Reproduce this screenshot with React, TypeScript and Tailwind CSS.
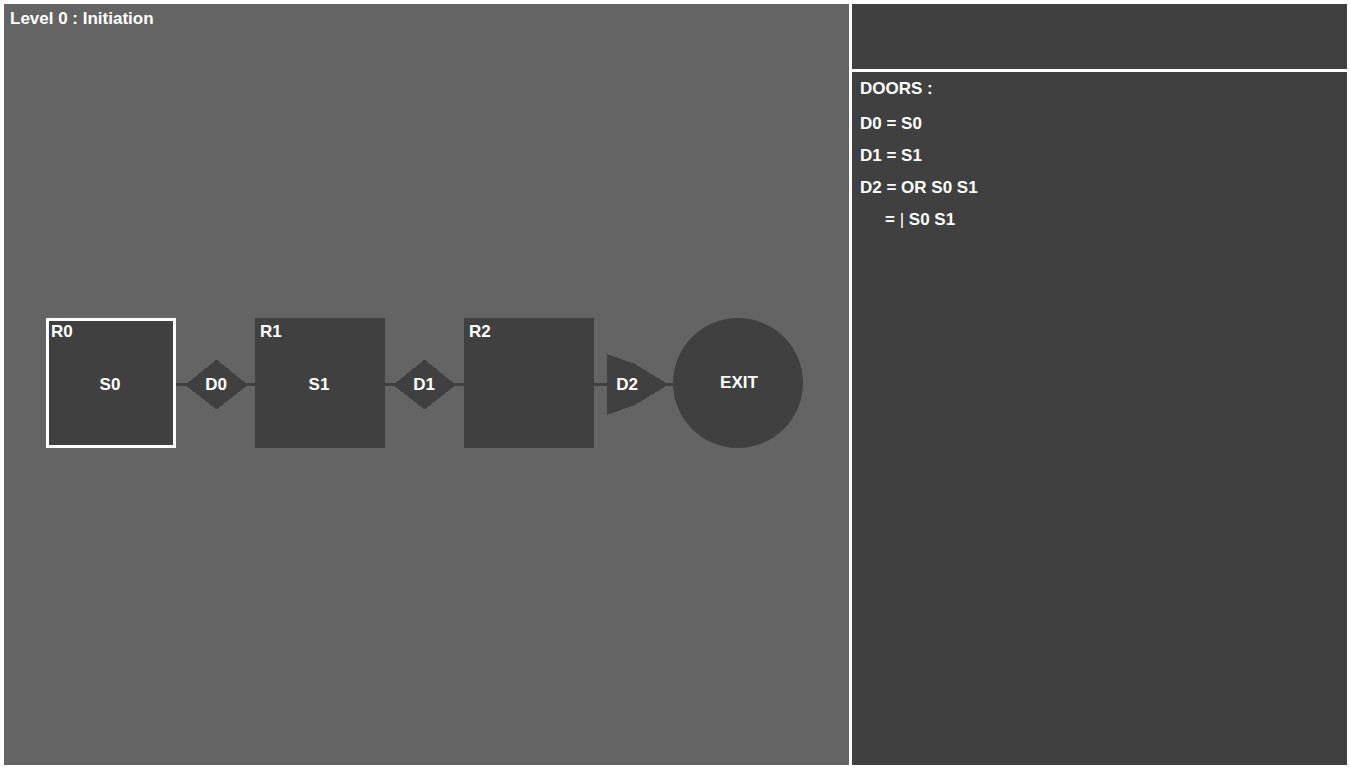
type Gate = { name: string; points: string; labelX: number };
type Room = { name: string; toggle: string; current: boolean; gate: Gate };

const rooms: Room[] = [
  {
    name: "R0",
    toggle: "S0",
    current: true,
    gate: { name: "D0", points: "9,67 40,42 41,42 72,67 41,91 40,91", labelX: 40 },
  },
  {
    name: "R1",
    toggle: "S1",
    current: false,
    gate: { name: "D1", points: "8,67 39,42 40,42 71,67 40,91 39,91", labelX: 39 },
  },
  {
    name: "R2",
    toggle: "",
    current: false,
    gate: { name: "D2", points: "13,36 41,46 72,65 72,68 41,87 13,97", labelX: 33 },
  },
];

const doors = ["D0 = S0", "D1 = S1", "D2 = OR S0 S1"];

function RoomBox({ room }: { room: Room }) {
  return (
    <div
      className={
        room.current
          ? "grid size-[130px] shrink-0 border-[3px] border-white bg-[#404040]"
          : "grid size-[130px] shrink-0 border-[3px] border-[#404040] bg-[#404040]"
      }
    >
      <span className="col-start-1 row-start-1 self-start pt-px pl-[2px]">{room.name}</span>
      <span className="col-start-1 row-start-1 place-self-center pt-[3px] pr-[2px]">{room.toggle}</span>
    </div>
  );
}

function Door({ gate }: { gate: Gate }) {
  return (
    <svg className="h-[130px] w-[79px] shrink-0" viewBox="0 0 79 130" shapeRendering="crispEdges">
      <rect x="0" y="65" width="79" height="3" fill="#404040" />
      <polygon points={gate.points} fill="#404040" />
      <text x={gate.labelX} y="72" textAnchor="middle" fill="white">
        {gate.name}
      </text>
    </svg>
  );
}

export default function App() {
  return (
    <div className="flex min-h-screen gap-[3px] bg-white pt-1 pr-[3px] pb-[3px] pl-1 font-['Liberation_Sans',Arial,sans-serif] text-[17px] leading-5 font-bold text-white">
      <main className="grid min-w-0 grow-[845] basis-0 bg-[#646464]">
        <h1 className="col-start-1 row-start-1 self-start pt-[5px] pl-[6px]">Level 0 : Initiation</h1>
        <div className="col-start-1 row-start-1 flex place-self-center pr-1 pb-[3px]">
          {rooms.map((room) => (
            <div key={room.name} className="flex">
              <RoomBox room={room} />
              <Door gate={room.gate} />
            </div>
          ))}
          <div className="flex size-[130px] shrink-0 items-center justify-center rounded-full bg-[#404040] pl-[2px]">
            EXIT
          </div>
        </div>
      </main>
      <aside className="flex min-w-0 grow-[495] basis-0 flex-col gap-[3px]">
        <div className="h-[65px] bg-[#404040]" />
        <section className="grow bg-[#404040] pt-[7px] pl-2">
          <h2>DOORS :</h2>
          <ul className="flex flex-col gap-3 pt-[15px]">
            {doors.map((door) => (
              <li key={door}>{door}</li>
            ))}
            <li className="pl-[25px]">
              = <span className="font-normal">|</span> S0 S1
            </li>
          </ul>
        </section>
      </aside>
    </div>
  );
}
